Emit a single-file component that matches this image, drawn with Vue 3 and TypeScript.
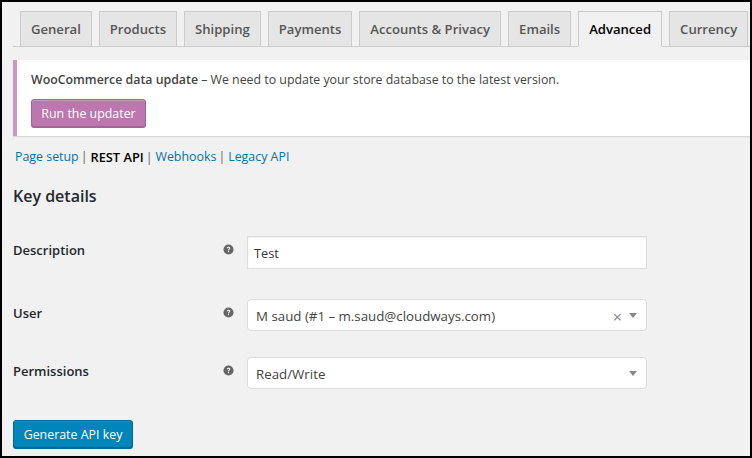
<script setup lang="ts">
const tabs: string[] = ['General', 'Products', 'Shipping', 'Payments', 'Accounts & Privacy', 'Emails', 'Advanced', 'Currency']
</script>

<template>
  <div class="frame">
    <nav class="tabs">
      <a v-for="t in tabs" :key="t" class="tab" :class="{ active: t === 'Advanced' }">{{ t }}</a>
    </nav>
    <div class="notice">
      <p><strong>WooCommerce data update</strong> – We need to update your store database to the latest version.</p>
      <button class="btn purple">Run the updater</button>
    </div>
    <ul class="subnav">
      <li><a>Page setup</a><span class="sep">|</span></li>
      <li><b>REST API</b><span class="sep">|</span></li>
      <li><a>Webhooks</a><span class="sep">|</span></li>
      <li><a>Legacy API</a></li>
    </ul>
    <h2>Key details</h2>
    <div class="row r1">
      <label>Description</label>
      <span class="help"><svg viewBox="0 0 12 12" width="11" height="11"><circle cx="6" cy="6" r="5.5" fill="#666"/><path d="M4.2 4.7c0-1 .8-1.6 1.8-1.6s1.9.6 1.9 1.5c0 1.300-1.500 1.300-1.500 2.400H5.500c0-1.600 1.300-1.500 1.300-2.300 0-.4-.3-.7-.8-.7s-.8.3-.8.7z" fill="#fff"/><rect x="5.400" y="7.700" width="1.200" height="1.200" fill="#fff"/></svg></span>
      <div class="input">Test</div>
    </div>
    <div class="row r2">
      <label>User</label>
      <span class="help"><svg viewBox="0 0 12 12" width="11" height="11"><circle cx="6" cy="6" r="5.5" fill="#666"/><path d="M4.2 4.7c0-1 .8-1.6 1.8-1.6s1.9.6 1.9 1.5c0 1.300-1.500 1.300-1.500 2.400H5.500c0-1.600 1.300-1.500 1.300-2.300 0-.4-.3-.7-.8-.7s-.8.3-.8.7z" fill="#fff"/><rect x="5.400" y="7.700" width="1.200" height="1.200" fill="#fff"/></svg></span>
      <div class="select">
        <span class="val">M saud (#1 – m.saud@cloudways.com)</span>
        <span class="clear">×</span>
        <span class="caret"></span>
      </div>
    </div>
    <div class="row r3">
      <label>Permissions</label>
      <span class="help"><svg viewBox="0 0 12 12" width="11" height="11"><circle cx="6" cy="6" r="5.5" fill="#666"/><path d="M4.2 4.7c0-1 .8-1.6 1.8-1.6s1.9.6 1.9 1.5c0 1.300-1.500 1.300-1.500 2.400H5.500c0-1.600 1.300-1.500 1.300-2.300 0-.4-.3-.7-.8-.7s-.8.3-.8.7z" fill="#fff"/><rect x="5.400" y="7.700" width="1.200" height="1.200" fill="#fff"/></svg></span>
      <div class="select">
        <span class="val">Read/Write</span>
        <span class="caret"></span>
      </div>
    </div>
    <button class="btn blue">Generate API key</button>
  </div>
</template>

<style>
html, body { margin: 0; padding: 0; background: #000; }
</style>

<style scoped>
.frame {
  box-sizing: border-box;
  width: 752px;
  height: 458px;
  border: 2px solid #000;
  background: #f1f1f1;
  padding: 9px 0 0 11px;
  overflow: hidden;
  font-family: "Open Sans", sans-serif;
  font-size: 13px;
  color: #444;
}
.tabs {
  display: flex;
  gap: 7px;
  padding-left: 7px;
  height: 35px;
  border-bottom: 1px solid #ccc;
}
.tab {
  box-sizing: border-box;
  height: 36px;
  padding: 0 10px;
  border: 1px solid #ccc;
  background: #e5e5e5;
  color: #555;
  font-size: 13.1px;
  font-weight: 600;
  line-height: 34px;
  white-space: nowrap;
}
.tab.active {
  background: #f1f1f1;
  border-bottom-color: #f1f1f1;
  color: #000;
}
.notice {
  box-sizing: border-box;
  margin-top: 13px;
  height: 76px;
  background: #fff;
  border-left: 4px solid #cc99c2;
  box-shadow: 0 1px 1px rgba(0, 0, 0, 0.1);
  padding: 10px 14px 9px;
}
.notice p {
  margin: 0 0 9px;
  font-size: 12.35px;
  line-height: 20px;
  color: #444;
}
.notice strong { font-weight: 600; }
.btn {
  display: block;
  box-sizing: border-box;
  height: 28px;
  padding: 2px 0 0;
  border-radius: 3px;
  border: 1px solid;
  color: #fff;
  font-family: inherit;
  font-size: 12.4px;
  line-height: 24px;
  white-space: nowrap;
  text-align: center;
}
.purple {
  width: 115px;
  background: #bb77ae;
  border-color: #a36597;
  box-shadow: inset 0 1px 0 rgba(255, 255, 255, 0.25), 0 1px 0 #a36597;
}
.subnav {
  list-style: none;
  display: flex;
  margin: 11px 0 0;
  padding: 0 0 0 2px;
  font-size: 12.4px;
  line-height: 20px;
}
.subnav a { color: #0073aa; }
.subnav b { color: #000; font-weight: 600; font-size: 12.8px; }
.sep { color: #666; padding: 0 3px 0 2px; }
h2 {
  margin: 17px 0 0;
  font-size: 16px;
  line-height: 22px;
  font-weight: 600;
  color: #23282d;
}
.row {
  display: flex;
  align-items: flex-start;
}
.row label {
  width: 210px;
  font-size: 13px;
  font-weight: 600;
  line-height: 20px;
  color: #23282d;
}
.help { width: 24px; height: 11px; display: block; }
.help svg { display: block; }
.r1 { margin-top: 28px; }
.r2 { margin-top: 31px; }
.r3 { margin-top: 27px; }
.r1 label { margin-top: 5px; }
.r2 label { margin-top: 3px; }
.r3 label { margin-top: 3px; }
.r1 .help { margin-top: 9px; }
.r2 .help { margin-top: 7px; }
.r3 .help { margin-top: 7px; }
.input, .select {
  box-sizing: border-box;
  width: 400px;
  background: #fff;
  border: 1px solid #ddd;
  color: #32373c;
  font-size: 13.3px;
}
.input {
  height: 33px;
  line-height: 33px;
  padding-left: 6px;
  margin-top: 1px;
  font-size: 12.8px;
  box-shadow: inset 0 1px 2px rgba(0, 0, 0, 0.07);
}
.select {
  height: 32px;
  border-radius: 4px;
  display: flex;
  align-items: center;
  padding: 0 9px 0 8px;
  color: #444;
}
.r2 .select, .r3 .select { margin-top: -1px; }
.val { flex: 1; margin-top: 2px; }
.clear { color: #888; font-size: 16px; margin: 3px 7px 0 0; line-height: 1; }
.caret {
  width: 0;
  height: 0;
  border-left: 4px solid transparent;
  border-right: 4px solid transparent;
  border-top: 5px solid #888;
}
.blue {
  margin-top: 31px;
  width: 120px;
  background: #0085ba;
  border-color: #006799;
  box-shadow: inset 0 1px 0 rgba(255, 255, 255, 0.1), 0 1px 0 #006799;
}
</style>
